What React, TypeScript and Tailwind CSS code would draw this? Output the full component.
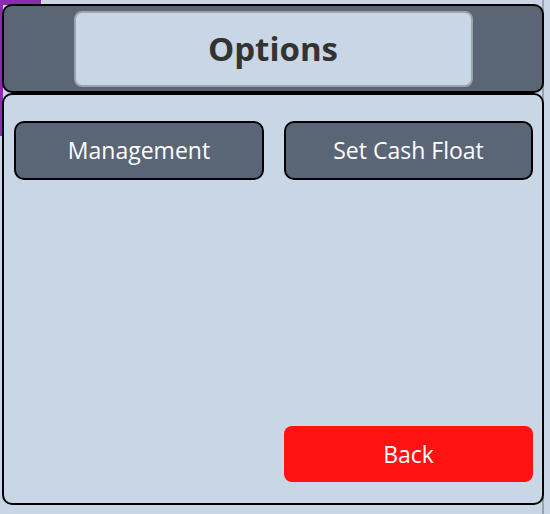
import React from 'react';

const font = { fontFamily: '"Open Sans", "Noto Sans", sans-serif' };

const OptionButton: React.FC<{ label: string }> = ({ label }) => (
    <button className="h-[59px] rounded-[10px] border-2 border-black bg-[#5a6575] text-[23px] leading-none text-white">
        {label}
    </button>
);

const App: React.FC = () => {
    return (
        <div className="relative h-[514px] w-[550px] overflow-hidden bg-[#c9d6e5]" style={font}>
            {/* window behind the panel */}
            <div className="absolute left-0 top-0 h-[5px] w-[41px] bg-[#8b2cb0]" />
            <div className="absolute left-0 top-0 h-[136px] w-[3px] bg-[#8b2cb0]" />
            <div className="absolute right-[6px] top-0 h-full w-[2px] bg-[#9aa3ad]" />

            <div className="relative ml-[2px] mt-[4px] flex w-[542px] flex-col">
                <header className="flex h-[89px] items-center justify-center rounded-[10px] border-2 border-black bg-[#5a6575]">
                    <div className="flex h-[76px] w-[399px] items-center justify-center rounded-[8px] border-2 border-[#9ca3aa] bg-[#c9d6e5]">
                        <h1 className="text-[33px] font-bold leading-none text-[#333333]">Options</h1>
                    </div>
                </header>

                <main className="flex h-[412px] flex-col rounded-[10px] border-2 border-black bg-[#c9d6e5] px-[10px] pb-[21px] pt-[26px]">
                    <div className="grid grid-cols-[250px_249px] gap-x-[20px]">
                        <OptionButton label="Management" />
                        <OptionButton label="Set Cash Float" />
                    </div>
                    <div className="flex-1" />
                    <div className="grid grid-cols-[250px_249px] gap-x-[20px]">
                        <div />
                        <button className="h-[56px] rounded-[8px] bg-[#ff1212] text-[23px] leading-none text-white">
                            Back
                        </button>
                    </div>
                </main>
            </div>
        </div>
    );
};

export default App;
